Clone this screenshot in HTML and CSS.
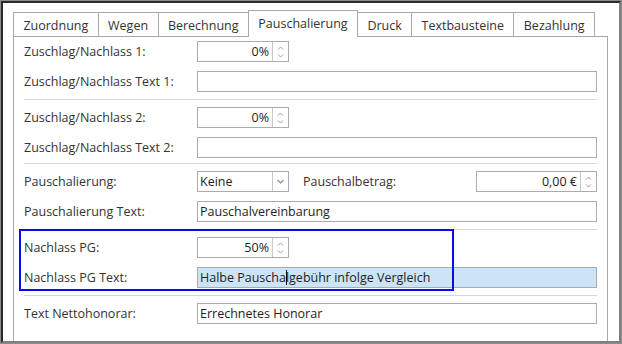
FILE: index.html
```html
<!DOCTYPE html>
<html lang="de">
<head>
    <meta charset="UTF-8">
    <title>Pauschalierung</title>
    <link rel="stylesheet" href="styles.css">
</head>
<body>
    <div class="window">
        <div class="window-inner">
            <div class="tabs">
                <div class="tab">Zuordnung</div>
                <div class="tab">Wegen</div>
                <div class="tab">Berechnung</div>
                <div class="tab active">Pauschalierung</div>
                <div class="tab">Druck</div>
                <div class="tab">Textbausteine</div>
                <div class="tab">Bezahlung</div>
            </div>

            <div class="panel">
                <!-- Zuschlag 1 -->
                <div class="row">
                    <span class="label">Zuschlag/Nachlass 1:</span>
                    <div class="spin">
                        <span class="value">0%</span>
                        <span class="arrows"><svg width="15" height="19" viewBox="0 0 15 19"><path d="M5 7.5 7.5 5 10 7.5M5 12.5 7.5 15 10 12.5" fill="none" stroke="#9a9a9a" stroke-width="1"/></svg></span>
                    </div>
                </div>
                <div class="row">
                    <span class="label">Zuschlag/Nachlass Text 1:</span>
                    <div class="field"></div>
                </div>
                <div class="sep"></div>

                <!-- Zuschlag 2 -->
                <div class="row">
                    <span class="label">Zuschlag/Nachlass 2:</span>
                    <div class="spin">
                        <span class="value">0%</span>
                        <span class="arrows"><svg width="15" height="19" viewBox="0 0 15 19"><path d="M5 7.5 7.5 5 10 7.5M5 12.5 7.5 15 10 12.5" fill="none" stroke="#9a9a9a" stroke-width="1"/></svg></span>
                    </div>
                </div>
                <div class="row">
                    <span class="label">Zuschlag/Nachlass Text 2:</span>
                    <div class="field"></div>
                </div>
                <div class="sep tight"></div>

                <!-- Pauschalierung -->
                <div class="row">
                    <span class="label">Pauschalierung:</span>
                    <div class="inline">
                        <div class="select">
                            <span class="value">Keine</span>
                            <span class="arrows"><svg width="15" height="19" viewBox="0 0 15 19"><path d="M4.5 8 7.5 11 10.5 8" fill="none" stroke="#8a8a8a" stroke-width="1.2"/></svg></span>
                        </div>
                        <span class="label sub">Pauschalbetrag:</span>
                        <div class="spin wide">
                            <span class="value">0,00 €</span>
                            <span class="arrows"><svg width="15" height="19" viewBox="0 0 15 19"><path d="M5 7.5 7.5 5 10 7.5M5 12.5 7.5 15 10 12.5" fill="none" stroke="#9a9a9a" stroke-width="1"/></svg></span>
                        </div>
                    </div>
                </div>
                <div class="row">
                    <span class="label">Pauschalierung Text:</span>
                    <div class="field">Pauschalvereinbarung</div>
                </div>
                <div class="sep"></div>

                <!-- Nachlass PG -->
                <div class="row">
                    <span class="label">Nachlass PG:</span>
                    <div class="spin">
                        <span class="value">50%</span>
                        <span class="arrows"><svg width="15" height="19" viewBox="0 0 15 19"><path d="M5 7.5 7.5 5 10 7.5M5 12.5 7.5 15 10 12.5" fill="none" stroke="#9a9a9a" stroke-width="1"/></svg></span>
                    </div>
                </div>
                <div class="row">
                    <span class="label">Nachlass PG Text:</span>
                    <div class="field focused">Halbe Pauscha<span class="caret"></span>lgebühr infolge Vergleich</div>
                </div>
                <div class="sep"></div>

                <div class="row">
                    <span class="label">Text Nettohonorar:</span>
                    <div class="field">Errechnetes Honorar</div>
                </div>

                <div class="mark"></div>
            </div>
        </div>
    </div>
</body>
</html>
```

FILE: styles.css
```css
* {
    margin: 0;
    padding: 0;
    box-sizing: border-box;
}

body {
    background: #ffffff;
    font-family: 'Open Sans', 'Noto Sans', sans-serif;
    font-size: 12.5px;
    color: #333333;
}

/* Fensterrahmen */
.window {
    width: 622px;
    height: 344px;
    border: 1px solid #8c8c8c;
    overflow: hidden;
}

.window-inner {
    height: 100%;
    border: 2px solid;
    border-color: #2a2a2a #808080 #808080 #2a2a2a;
    display: flex;
    flex-direction: column;
}

/* Reiter */
.tabs {
    display: flex;
    align-items: flex-end;
    padding: 7px 0 0 10px;
    height: 33px;
}

.tab {
    height: 24px;
    padding: 1px 9.4px 0;
    border: 1px solid #a9a9a9;
    border-bottom: none;
    margin-left: -1px;
    background: #ffffff;
    display: flex;
    align-items: center;
    white-space: nowrap;
}

.tab:first-child {
    margin-left: 0;
}

.tab.active {
    height: 27px;
    margin-bottom: -1px;
    padding-top: 0;
    padding-bottom: 2px;
    position: relative;
    z-index: 1;
}

/* Inhalt */
.panel {
    flex: 1;
    position: relative;
    margin: 0 11px 0 10px;
    padding: 4px 10px 0 10px;
    border: 1px solid #a9a9a9;
    border-bottom: none;
    display: flex;
    flex-direction: column;
    gap: 9px;
}

.row {
    display: grid;
    grid-template-columns: 173px 1fr;
    align-items: center;
    height: 21px;
}

.label {
    white-space: nowrap;
}

.sep {
    height: 1px;
    background: #d6d6d6;
    margin: -2px 0;
}

.sep.tight {
    margin-top: -4px;
}

.field {
    height: 21px;
    border: 1px solid #ababab;
    padding: 0 2px;
    line-height: 19px;
    color: #1e1e1e;
    white-space: nowrap;
}

.field.focused {
    background: #cce4f7;
}

.caret {
    display: inline-block;
    width: 1px;
    height: 15px;
    margin-right: -1px;
    background: #000000;
    vertical-align: -3px;
}

.spin,
.select {
    width: 92px;
    height: 21px;
    border: 1px solid #ababab;
    display: flex;
    color: #1e1e1e;
}

.spin.wide {
    width: 121px;
}

.spin .value {
    flex: 1;
    text-align: right;
    padding-right: 3px;
    line-height: 19px;
}

.select .value {
    flex: 1;
    padding-left: 2px;
    line-height: 19px;
}

.arrows {
    width: 16px;
    border-left: 1px solid #c8c8c8;
    display: flex;
    align-items: center;
}

.inline {
    display: flex;
    align-items: center;
}

.label.sub {
    margin-left: 14px;
    flex: 1;
}

/* Markierung */
.mark {
    position: absolute;
    left: 5px;
    top: 192px;
    width: 435px;
    height: 62px;
    border: 2px solid #0a0af0;
    pointer-events: none;
}
```
